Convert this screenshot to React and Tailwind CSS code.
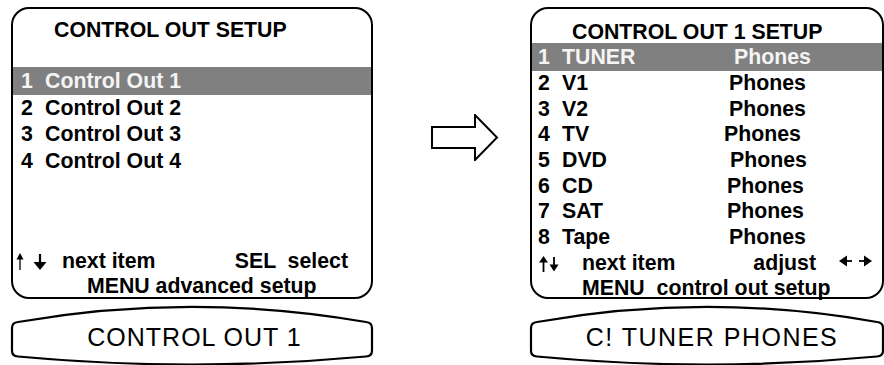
import React from 'react';

const leftRows = ['Control Out 1', 'Control Out 2', 'Control Out 3', 'Control Out 4'];

// phones column starts a little differently on each row in the original
const rightRows = [
    {label: 'TUNER', col: 'w-[172px]'},
    {label: 'V1', col: 'w-[167px]'},
    {label: 'V2', col: 'w-[167px]'},
    {label: 'TV', col: 'w-[162px]'},
    {label: 'DVD', col: 'w-[168px]'},
    {label: 'CD', col: 'w-[165px]'},
    {label: 'SAT', col: 'w-[165px]'},
    {label: 'Tape', col: 'w-[167px]'},
];

// radius of a circle arc through a chord with a given sag
const arcR = (chord, sag) => (chord * chord / 4 + sag * sag) / (2 * sag);

const Barrel = ({width, text, shift}) => {
    const w = width;
    const c = w - 14;
    const top = arcR(c, 15).toFixed(1);
    const bot = arcR(c, 8).toFixed(1);
    const d = `M1,24 Q1,18.5 7,18 A${top},${top} 0 0 1 ${w - 7},18 Q${w - 1},18.5 ${w - 1},24 L${w - 1},47 Q${w - 1},52 ${w - 7},52.5 A${bot},${bot} 0 0 1 7,52.5 Q1,52 1,47 Z`;
    return (
        <div className="relative h-[61px] mt-[5px]">
            <svg className="absolute left-0 top-0 overflow-visible" width={w} height="61" viewBox={`0 0 ${w} 61`}>
                <path d={d} fill="none" stroke="#000" strokeWidth="2.2" />
            </svg>
            <div className={`relative h-full flex items-center justify-center pt-[6px] ${shift} text-[25px] leading-[25px] text-black`}>
                {text}
            </div>
        </div>
    );
};

const UpDownThin = () => (
    <svg width="34" height="18" viewBox="0 0 34 18" className="mt-[4px]">
        <line x1="6" y1="3" x2="6" y2="17" stroke="#000" strokeWidth="1.3" />
        <polygon points="2.5,6.5 6,0 9.5,6.5" fill="#000" />
        <line x1="26" y1="1" x2="26" y2="11" stroke="#000" strokeWidth="2.2" />
        <polygon points="19.5,9 32.5,9 26,17" fill="#000" />
    </svg>
);

const UpDown = () => (
    <svg width="20" height="16" viewBox="0 0 20 16" className="mt-[5px]">
        <line x1="4.5" y1="4" x2="4.5" y2="16" stroke="#000" strokeWidth="1.8" />
        <polygon points="0,6.5 4.5,0 9,6.5" fill="#000" />
        <line x1="15" y1="1" x2="15" y2="10" stroke="#000" strokeWidth="1.8" />
        <polygon points="10.5,8.5 19.5,8.5 15,15.5" fill="#000" />
    </svg>
);

const LeftRight = () => (
    <svg width="33" height="12" viewBox="0 0 33 12" className="mt-[4px]">
        <polygon points="0,6 8,0.5 8,11.5" fill="#000" />
        <line x1="8" y1="6" x2="13" y2="6" stroke="#000" strokeWidth="1.8" />
        <line x1="20" y1="6" x2="25" y2="6" stroke="#000" strokeWidth="1.8" />
        <polygon points="25,0.5 33,6 25,11.5" fill="#000" />
    </svg>
);

export default function App() {
    return (
        <div className="w-[884px] h-[365px] bg-white overflow-hidden flex font-['Liberation_Sans',Arial,sans-serif] text-black">
            {/* left screen */}
            <div className="ml-[11px] w-[362px] flex flex-col">
                <div className="mt-[7px] h-[292px] border-2 border-black rounded-[18px] flex flex-col font-bold text-[21.3px]">
                    <div className="pt-[8px] pl-[41px] leading-[26px]">CONTROL OUT SETUP</div>
                    <div className="mt-[24px]">
                        {leftRows.map((row, i) => (
                            <div key={row} className={`flex pl-[8px] ${i == 0 ? 'h-[28px] leading-[28px] bg-[#808080] text-[#f4f4f4]' : 'h-[26.3px] leading-[26.3px]'}`}>
                                <span className="w-[24px]">{i + 1}</span>
                                <span>{row}</span>
                            </div>
                        ))}
                    </div>
                    <div className="mt-auto">
                        <div className="flex pl-[1px] pr-[23px] leading-[25px] whitespace-pre">
                            <UpDownThin />
                            <span className="ml-[14px]">next item</span>
                            <span className="ml-auto">SEL  select</span>
                        </div>
                        <div className="pl-[74px] leading-[25px] -mb-[2px]">MENU advanced setup</div>
                    </div>
                </div>
                <Barrel width={362} text="CONTROL OUT 1" shift="pl-[5px] tracking-[1px]" />
            </div>

            {/* middle arrow */}
            <div className="w-[157px] pt-[114px] pl-[58px]">
                <svg width="68" height="47" viewBox="0 0 68 47">
                    <polygon points="1,13 44,13 44,1 66,23.5 44,46 44,34 1,34" fill="#fff" stroke="#000" strokeWidth="2" strokeLinejoin="miter" />
                </svg>
            </div>

            {/* right screen */}
            <div className="w-[354px] flex flex-col">
                <div className="mt-[7px] h-[292px] border-2 border-black rounded-[18px] flex flex-col font-bold text-[21.3px]">
                    <div className="pt-[13px] pl-[40px] h-[34px] leading-[21px]">CONTROL OUT 1 SETUP</div>
                    <div>
                        {rightRows.map((row, i) => (
                            <div key={row.label} className={`flex pl-[6px] ${i == 0 ? 'h-[28px] leading-[28px] bg-[#808080] text-[#f4f4f4]' : 'h-[25.7px] leading-[25.7px]'}`}>
                                <span className="w-[24px]">{i + 1}</span>
                                <span className={row.col}>{row.label}</span>
                                <span>Phones</span>
                            </div>
                        ))}
                    </div>
                    <div className="flex pl-[7px] pr-[10px] leading-[25px]">
                        <UpDown />
                        <span className="ml-[23px]">next item</span>
                        <span className="ml-auto mr-[23px]">adjust</span>
                        <LeftRight />
                    </div>
                    <div className="pl-[50px] leading-[25px] whitespace-pre -mb-[4px]">MENU  control out setup</div>
                </div>
                <Barrel width={354} text="C! TUNER PHONES" shift="pl-[10px] tracking-[1.5px]" />
            </div>
        </div>
    );
}
